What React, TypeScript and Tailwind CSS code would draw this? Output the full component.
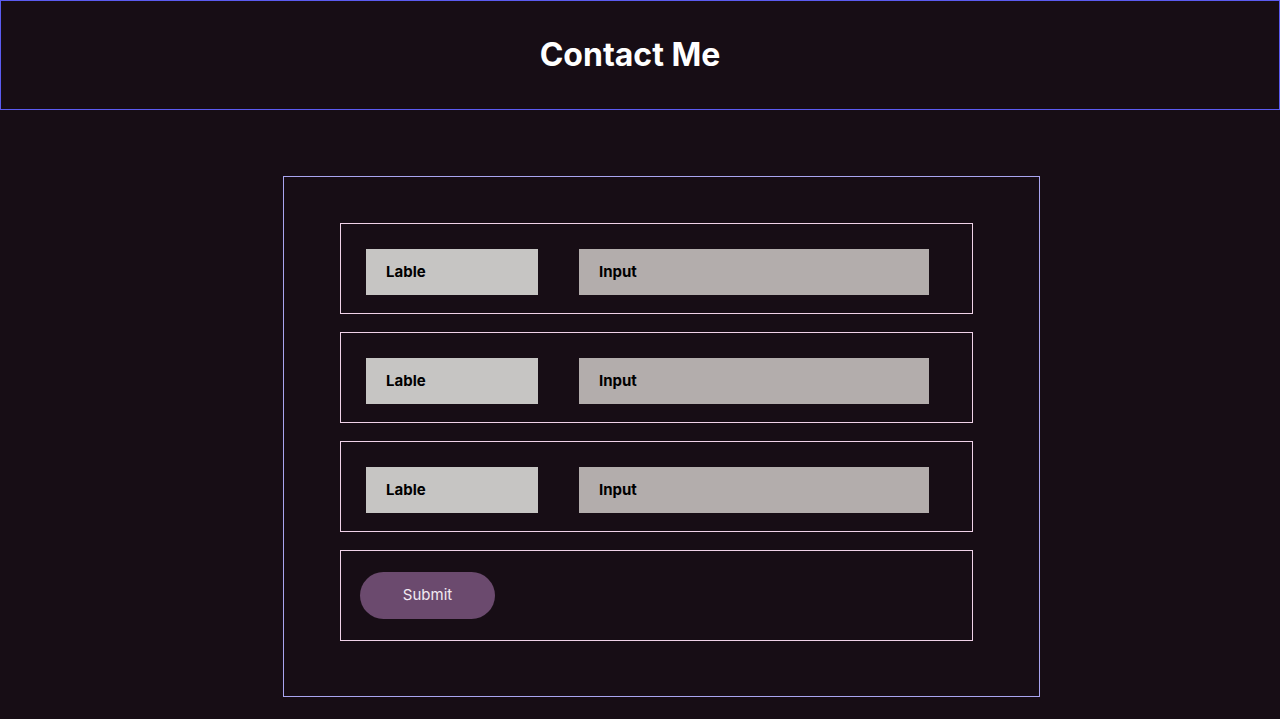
const rows = ['Lable', 'Lable', 'Lable'];

const FieldRow = ({ label }: { label: string }) => (
  <div className="flex items-start h-[91px] border border-[#f0d2e8] pl-[25px] pt-[25px]">
    <div className="flex items-center w-[172px] h-[46px] bg-[#c6c5c3] pl-5 text-[15px] font-bold text-black">
      {label}
    </div>
    <div className="flex items-center w-[350px] h-[46px] ml-[41px] bg-[#b3adac] pl-5 text-[15px] font-bold text-black">
      Input
    </div>
  </div>
);

export default function App() {
  return (
    <div
      className="min-h-[719px] bg-[#170d15] text-white"
      style={{ fontFamily: 'Inter, "Noto Sans", sans-serif' }}
    >
      <header className="flex items-center justify-center h-[110px] border border-[#5b5bf0] pr-[20px]">
        <h1 className="text-[32px] font-bold text-white">Contact Me</h1>
      </header>

      <div className="flex pt-[66px] pl-[283px]">
        <form className="flex flex-col gap-[18px] w-[757px] h-[521px] border border-[#a9a5f0] pt-[46px] pl-[56px]">
          {rows.map((label, i) => (
            <div key={i} className="w-[633px]">
              <FieldRow label={label} />
            </div>
          ))}
          <div className="flex items-start w-[633px] h-[91px] border border-[#f0d2e8] pl-[19px] pt-[21px]">
            <button
              type="button"
              className="w-[135px] h-[47px] rounded-full bg-[#6b4a6e] text-[15px] text-[#f2eaf2]"
            >
              Submit
            </button>
          </div>
        </form>
      </div>
    </div>
  );
}
